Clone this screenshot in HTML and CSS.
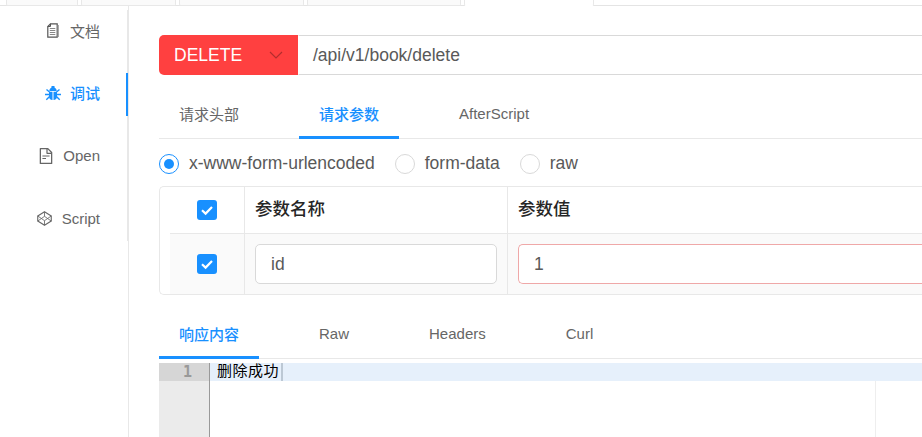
FILE: index.html
```html
<!DOCTYPE html>
<html lang="zh">
<head>
<meta charset="utf-8">
<title>调试</title>
<link rel="stylesheet" href="styles.css">
</head>
<body>
<div class="app">
  <div class="doc-tabs">
    <div class="doc-tab w1"></div>
    <div class="doc-tab w2"></div>
    <div class="doc-tab w3"></div>
    <div class="doc-tab w4"></div>
    <div class="doc-tab active"></div>
  </div>
  <div class="workspace">
    <nav class="side">
      <div class="side-list">
        <div class="side-item">
          <svg class="ic-doc" viewBox="0 0 12 15"><path d="M3.500 .8h6.700v13.400H.8V3.500z" fill="none" stroke="#555" stroke-width="1.200"/><path d="M3.500 .8v2.700H.8" fill="none" stroke="#555" stroke-width="1"/><path d="M2.800 5.500h5.500M2.800 7.500h5.500M2.800 9.500h5.500M2.800 11.500h5.500" stroke="#888" stroke-width="1"/><path d="M11.400 2v12" stroke="#aaa" stroke-width="1.200"/></svg>
          <span>文档</span>
        </div>
        <div class="side-item on">
          <svg class="ic-bug" viewBox="0 0 16 16"><path d="M4.300 6C4.500 3.600 6 2.300 8 2.300S11.500 3.600 11.700 6z" fill="#1890ff"/><path d="M6.500 1h3v2h-3z" fill="#1890ff"/><path d="M4 6.700h3.500V15C5.300 15 4 13.500 4 11.500zM8.500 6.700H12v4.800C12 13.500 10.700 15 8.500 15z" fill="#1890ff"/><path d="M0 9.500h4M12 9.500h4M1.500 4.500l3 2.500M14.500 4.500l-3 2.500M1.300 14.800l3-3M14.700 14.800l-3-3" stroke="#1890ff" stroke-width="1.400" fill="none"/></svg>
          <span>调试</span>
        </div>
        <div class="side-item">
          <svg class="ic-file" viewBox="64 64 896 896"><path fill="#666" d="M854.6 288.6L639.4 73.4c-6-6-14.1-9.4-22.6-9.4H192c-17.7 0-32 14.3-32 32v832c0 17.7 14.3 32 32 32h640c17.7 0 32-14.3 32-32V311.3c0-8.5-3.4-16.7-9.400-22.7zM790.2 326H602V137.8L790.2 326zm1.8 562H232V136h302v216a42 42 0 0 0 42 42h216v494zM504 618H320c-4.400 0-8 3.600-8 8v48c0 4.400 3.600 8 8 8h184c4.400 0 8-3.600 8-8v-48c0-4.400-3.600-8-8-8zM312 490v48c0 4.400 3.600 8 8 8h384c4.400 0 8-3.600 8-8v-48c0-4.400-3.600-8-8-8H320c-4.400 0-8 3.600-8 8z"/></svg>
          <span>Open</span>
        </div>
        <div class="side-item">
          <svg class="ic-box" viewBox="0 0 16 16"><path d="M8 .8l7.200 4.500v5.400L8 15.200.8 10.700V5.300z" fill="none" stroke="#666" stroke-width="1.200" stroke-linejoin="round"/><path d="M.8 5.300L8 10.300l7.200-5M.8 10.700L8 5.700l7.200 5M8 .8v4.900M8 10.300v4.900" fill="none" stroke="#666" stroke-width=".9"/></svg>
          <span>Script</span>
        </div>
      </div>
    </nav>
    <main class="content">
      <div class="url-bar">
        <div class="method">
          <span>DELETE</span>
          <svg class="chev" viewBox="0 0 14 8"><path d="M1 1l6 6 6-6" fill="none" stroke="#000" stroke-opacity=".3" stroke-width="1.200"/></svg>
        </div>
        <div class="url">/api/v1/book/delete</div>
      </div>

      <div class="tabs">
        <div class="tab">请求头部</div>
        <div class="tab on">请求参数</div>
        <div class="tab">AfterScript</div>
      </div>

      <div class="radios">
        <label class="radio"><i class="dot on"></i><span class="radio-text">x-www-form-urlencoded</span></label>
        <label class="radio"><i class="dot"></i><span class="radio-text">form-data</span></label>
        <label class="radio"><i class="dot"></i><span class="radio-text">raw</span></label>
      </div>

      <div class="table">
        <div class="row head">
          <div class="cell check"><i class="box"><svg viewBox="0 0 20 20"><path d="M5 10.200l3.600 3.400L15 7" fill="none" stroke="#fff" stroke-width="2.200"/></svg></i></div>
          <div class="cell name">参数名称</div>
          <div class="cell value">参数值</div>
        </div>
        <div class="row body">
          <div class="cell check"><i class="box"><svg viewBox="0 0 20 20"><path d="M5 10.200l3.600 3.400L15 7" fill="none" stroke="#fff" stroke-width="2.200"/></svg></i></div>
          <div class="cell name"><div class="field">id</div></div>
          <div class="cell value"><div class="field err">1</div></div>
        </div>
      </div>

      <div class="tabs resp">
        <div class="tab on">响应内容</div>
        <div class="tab">Raw</div>
        <div class="tab">Headers</div>
        <div class="tab">Curl</div>
      </div>

      <div class="editor">
        <div class="gutter"><div class="gutter-cell">1</div></div>
        <div class="lines">
          <div class="line"><span class="line-text">删除成功</span><span class="caret"></span></div>
          <div class="print-margin"></div>
        </div>
      </div>
    </main>
  </div>
</div>
</body>
</html>
```

FILE: styles.css
```css
* { box-sizing: border-box; }
html, body { margin: 0; height: 100%; background: #fff; overflow: hidden; }
body { font-family: "Liberation Sans", "Noto Sans CJK SC", sans-serif; color: #595959; }
.app { display: flex; flex-direction: column; width: 922px; height: 437px; overflow: hidden; }

.doc-tabs { display: flex; height: 6px; padding-left: 6px; gap: 3px; border-bottom: 1px solid #e4e4e4; flex: none; }
.doc-tab { height: 6px; background: #fafafa; border: 1px solid #e8e8e8; border-top: 0; border-radius: 0 0 2px 2px; }
.w1 { width: 72px; }
.w2 { width: 95px; }
.w3 { width: 125px; }
.w4 { width: 154px; }
.doc-tab.active { width: 130px; background: #fff; border-bottom-color: #fff; border-top: 0; }

.workspace { flex: 1; display: flex; min-height: 0; }

.side { width: 128px; flex: none; padding-top: 4px; }
.side-list { height: 231px; border-right: 1px solid #e8e8e8; }
.side-item { position: relative; display: flex; align-items: center; justify-content: flex-end; height: 43px; margin-bottom: 19.75px; padding: 0 27px 3px 0; font-size: 15px; color: #666; }
.side-item svg { flex: none; }
.side-item.on { color: #1890ff; font-weight: 500; }
.side-item.on::after { content: ""; position: absolute; right: -1px; top: 0; bottom: 0; width: 2px; background: #1890ff; }
.ic-doc { width: 12px; height: 15px; margin-right: 11px; }
.ic-bug { width: 16px; height: 16px; margin-right: 9px; }
.ic-file { width: 16px; height: 16px; margin-right: 9px; }
.ic-box { width: 15px; height: 15px; margin-right: 10px; }

.content { flex: 1; min-width: 0; display: flex; flex-direction: column; border-left: 1px solid #e8e8e8; padding-left: 30px; }

.url-bar { display: flex; height: 40px; margin-top: 29px; flex: none; font-size: 17.5px; }
.method { width: 139px; display: flex; align-items: center; justify-content: space-between; padding: 0 15px; background: #ff4040; color: #fff; border-radius: 5px 0 0 5px; }
.chev { width: 14px; height: 8px; }
.url { flex: 1; display: flex; align-items: center; padding-left: 14px; border: 1px solid #d9d9d9; border-left: 1px solid #fff; border-right: 0; }

.tabs { display: flex; gap: 40px; height: 51px; margin-top: 13px; flex: none; border-bottom: 1px solid #e8e8e8; font-size: 15px; }
.tab { display: flex; align-items: center; height: 51px; padding: 2px 20px 0; border-bottom: 3px solid transparent; color: #666; }
.tab.on { color: #1890ff; border-bottom-color: #1890ff; font-weight: 500; }
.resp { margin-top: 13px; }

.radios { display: flex; gap: 20px; height: 20px; margin-top: 15px; flex: none; font-size: 17.5px; }
.radio { display: flex; align-items: center; gap: 10px; color: #595959; }
.radio-text { margin-bottom: 2px; }
.dot { width: 20px; height: 20px; border: 1px solid #d9d9d9; border-radius: 50%; background: #fff; display: flex; align-items: center; justify-content: center; }
.dot.on { border-color: #1890ff; }
.dot.on::after { content: ""; width: 10px; height: 10px; border-radius: 50%; background: #1890ff; }

.table { margin-top: 12px; flex: none; border: 1px solid #e8e8e8; border-right: 0; border-radius: 5px 0 0 5px; font-size: 17.5px; height: 109px; }
.row { display: grid; grid-template-columns: 85px 263px 1fr; }
.head { height: 46px; }
.body { height: 61px; margin-left: 10px; grid-template-columns: 75px 263px 1fr; background: #fafafa; border-top: 1px solid #e8e8e8; }
.cell { display: flex; align-items: center; border-right: 1px solid #e8e8e8; }
.cell:last-child { border-right: 0; }
.check { justify-content: center; }
.head .check { padding-left: 10px; }
.name, .value { padding: 0 10px; }
.head .name, .head .value { color: #262626; font-weight: 500; padding-bottom: 6px; }
.box { display: block; width: 20px; height: 20px; border-radius: 3px; background: #1890ff; }
.box svg { display: block; width: 20px; height: 20px; }
.field { flex: 1; height: 40px; display: flex; align-items: center; padding-left: 15px; background: #fff; border: 1px solid #d9d9d9; border-radius: 5px; color: #595959; }
.field.err { border-color: #efa8a8; border-right: 0; border-radius: 5px 0 0 5px; margin-right: -10px; }

.editor { flex: 1; min-height: 0; display: flex; margin-top: 4px; }
.gutter { width: 51px; flex: none; background: #ebebeb; border-right: 1px solid #999; }
.gutter-cell { height: 18px; background: #d6d6d6; font: bold 15px/18px "DejaVu Sans Mono", monospace; color: #999; text-align: right; padding-right: 17px; }
.lines { position: relative; flex: 1; min-width: 0; }
.line { display: flex; height: 18px; padding-left: 7px; background: #e6f0fb; font-size: 15px; line-height: 15px; letter-spacing: .5px; color: #000; }
.caret { width: 2px; height: 18px; margin-left: 2px; background: #bcc8d4; }
.print-margin { position: absolute; left: 665px; top: 18px; bottom: 0; width: 1px; background: #eeeeee; }
```
